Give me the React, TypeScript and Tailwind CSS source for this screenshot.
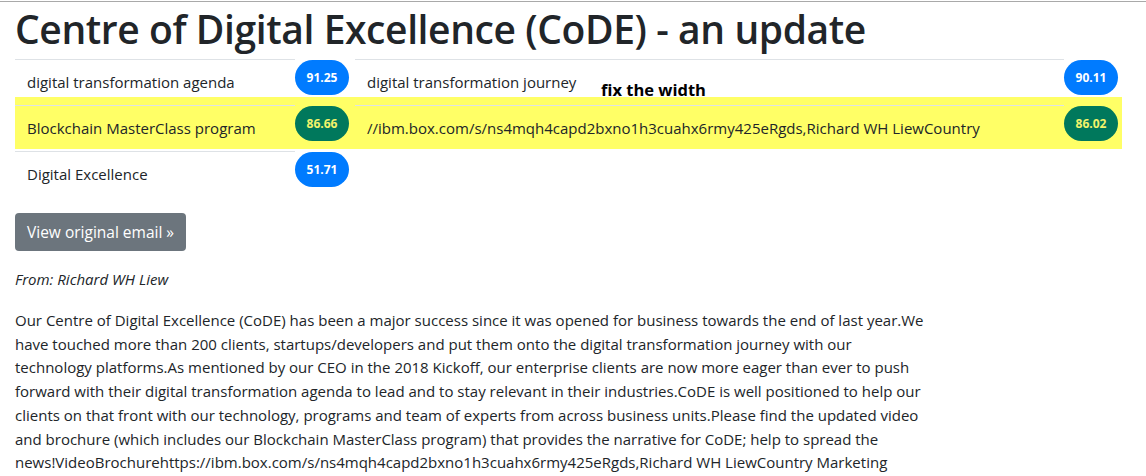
const paragraph = [
  "Our Centre of Digital Excellence (CoDE) has been a major success since it was opened for business towards the end of last year.We",
  "have touched more than 200 clients, startups/developers and put them onto the digital transformation journey with our",
  "technology platforms.As mentioned by our CEO in the 2018 Kickoff, our enterprise clients are now more eager than ever to push",
  "forward with their digital transformation agenda to lead and to stay relevant in their industries.CoDE is well positioned to help our",
  "clients on that front with our technology, programs and team of experts from across business units.Please find the updated video",
  "and brochure (which includes our Blockchain MasterClass program) that provides the narrative for CoDE; help to spread the",
  "news!VideoBrochurehttps://ibm.box.com/s/ns4mqh4capd2bxno1h3cuahx6rmy425eRgds,Richard WH LiewCountry Marketing",
];

type BadgeProps = { score: string; highlight?: boolean };

const Badge = ({ score, highlight }: BadgeProps) => (
  <div
    className={
      highlight
        ? "flex h-[35px] w-[54px] items-center justify-center rounded-full bg-[#00785c] text-[12px] font-bold text-[#f3f36a]"
        : "flex h-[35px] w-[54px] items-center justify-center rounded-full bg-[#007bff] text-[12px] font-bold text-white"
    }
  >
    {score}
  </div>
);

const Cell = ({ text, wide }: { text: string; wide?: boolean }) => (
  <div
    className={
      (wide ? "w-[709px]" : "w-[280px]") +
      " border-t border-[#dee2e6] pl-3 pt-[10px] leading-6 whitespace-nowrap"
    }
  >
    {text}
  </div>
);

export default function App() {
  return (
    <div className="relative min-h-[476px] bg-white font-['Open_Sans',sans-serif] text-[15px] text-[#212529]">
      <div className="pt-px">
        <div className="border-t border-[#a9a9a9]" />
      </div>

      <div className="px-[15px]">
        <h1 className="pt-[3px] text-[39px] font-semibold leading-[48px] tracking-[-0.4px]">
          Centre of Digital Excellence (CoDE) - an update
        </h1>

        <div className="mt-[6px] flex h-[38px] items-start">
          <Cell text="digital transformation agenda" />
          <div className="pt-px">
            <Badge score="91.25" />
          </div>
          <div className="w-[6px]" />
          <Cell text="digital transformation journey" wide />
          <div className="pt-px">
            <Badge score="90.11" />
          </div>
        </div>

        <div className="w-[1107px] bg-[#ffff66] pt-[8px]">
          <div className="flex h-[44px] items-start">
            <Cell text="Blockchain MasterClass program" />
            <div className="pt-px">
              <Badge score="86.66" highlight />
            </div>
            <div className="w-[6px]" />
            <Cell
              text="//ibm.box.com/s/ns4mqh4capd2bxno1h3cuahx6rmy425eRgds,Richard WH LiewCountry"
              wide
            />
            <div className="pt-px">
              <Badge score="86.02" highlight />
            </div>
          </div>
        </div>

        <div className="mt-[2px] flex h-[46px] items-start">
          <Cell text="Digital Excellence" />
          <div className="pt-px">
            <Badge score="51.71" />
          </div>
        </div>

        <button className="mt-[16px] h-[38px] rounded-[4px] bg-[#6c757d] px-3 text-[15.5px] leading-6 text-white">
          View original email »
        </button>

        <p className="mt-[16px] italic leading-6">From: Richard WH Liew</p>

        <p className="mt-[18px] leading-[23.7px]">
          {paragraph.map((line) => (
            <span key={line} className="block whitespace-nowrap">
              {line}
            </span>
          ))}
        </p>
      </div>

      <div className="absolute left-[601px] top-[80px] text-[16.5px] font-bold leading-5 text-black">
        fix the width
      </div>
    </div>
  );
}
